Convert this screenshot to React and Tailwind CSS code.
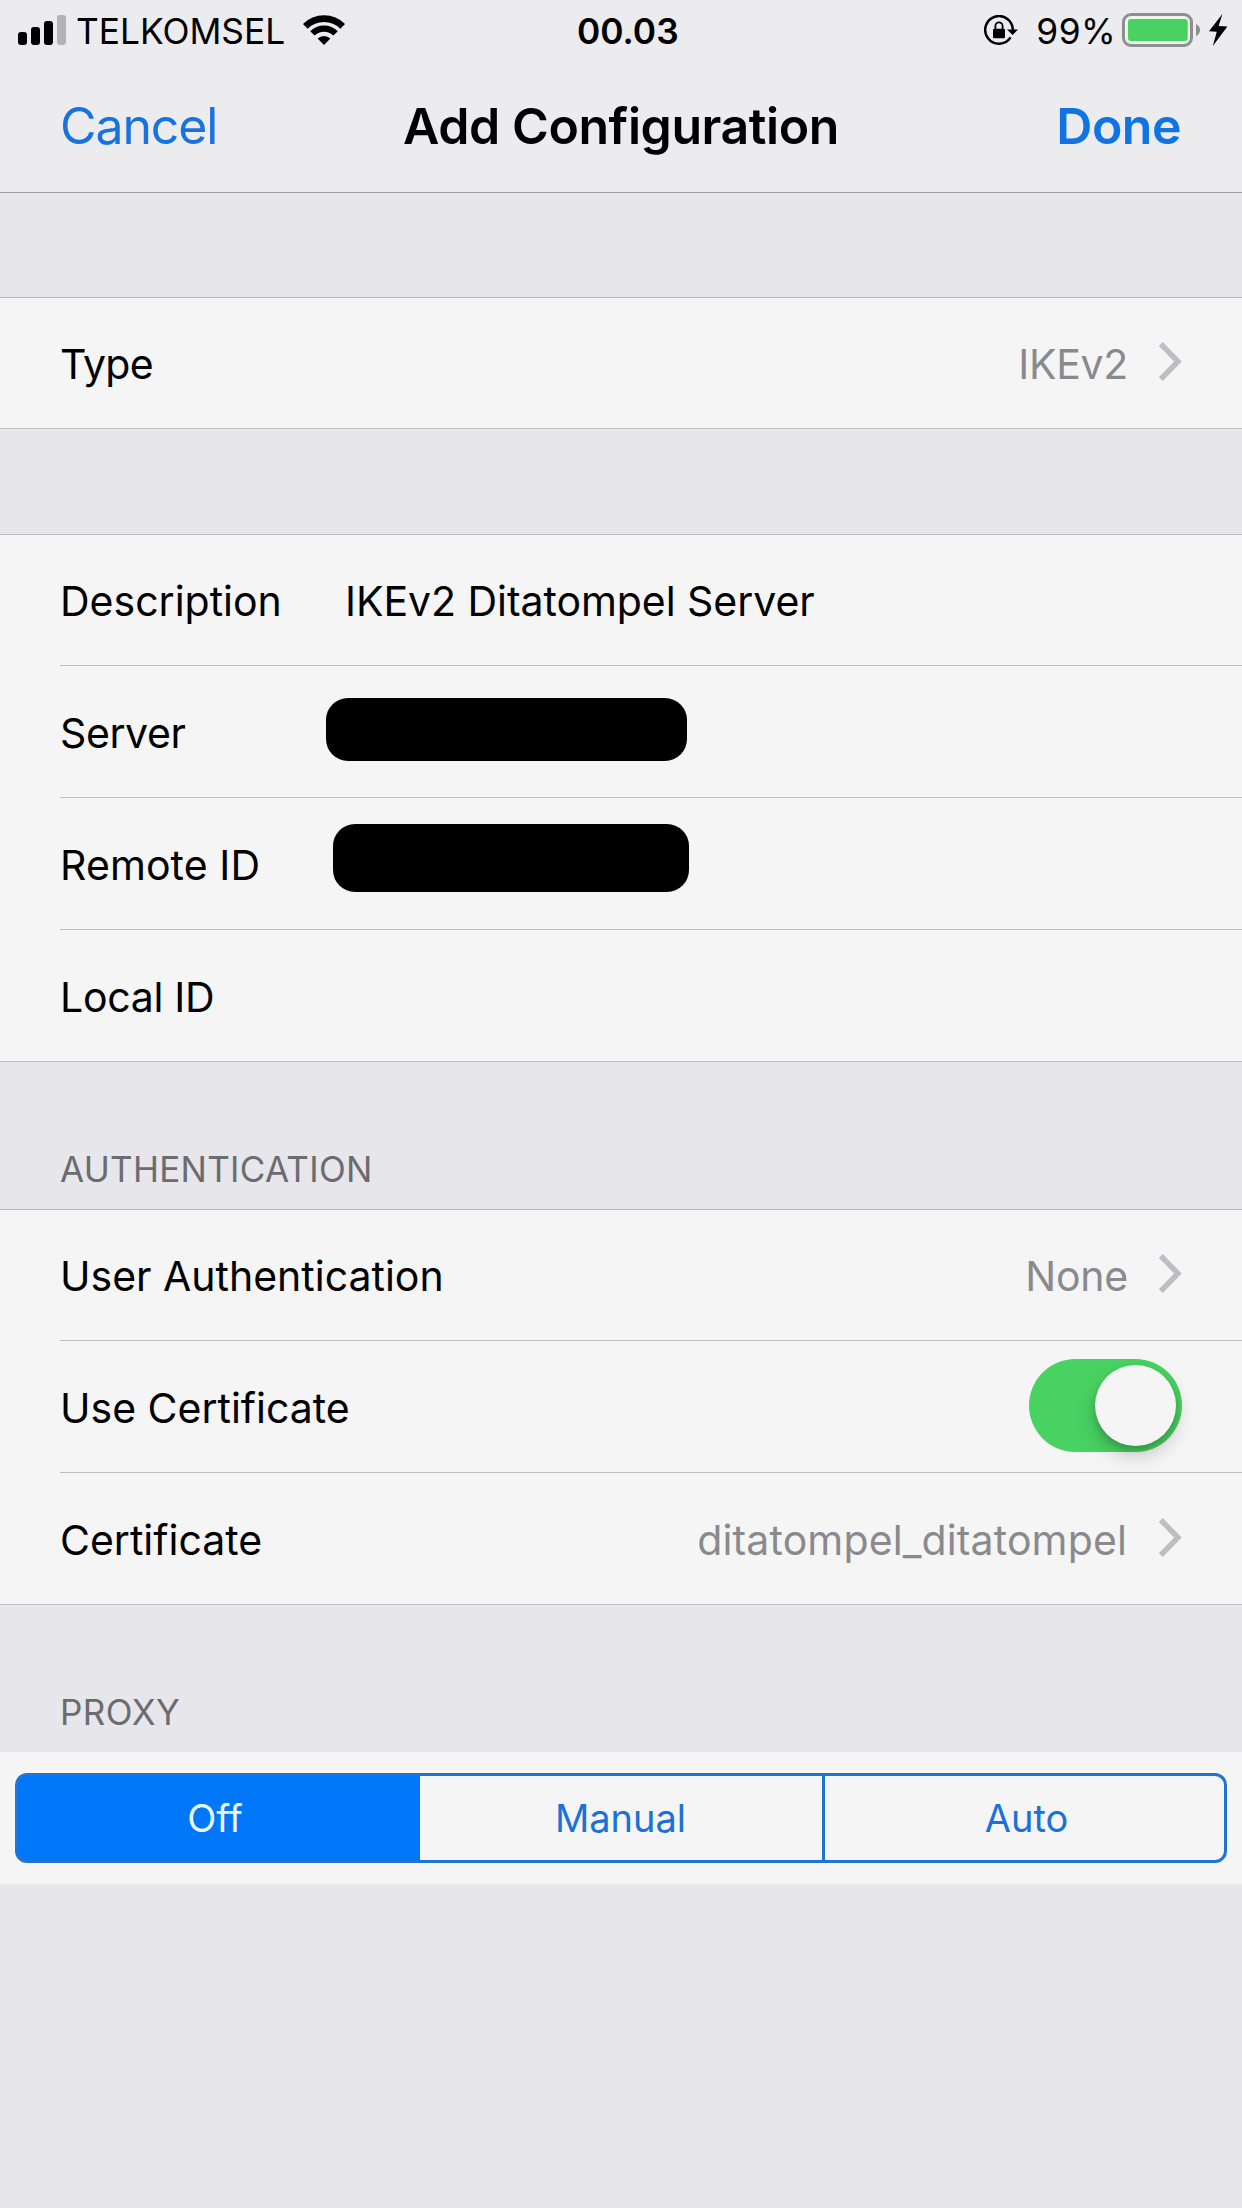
import React from "react";

function SignalIcon() {
  return (
    <svg width="48" height="30" viewBox="0 0 48 30" className="shrink-0">
      <rect x="0" y="17" width="9" height="13" rx="3" fill="#000" />
      <rect x="13" y="12" width="9" height="18" rx="3" fill="#000" />
      <rect x="26" y="6" width="9" height="24" rx="3" fill="#000" />
      <rect x="39" y="0" width="9" height="30" rx="3" fill="#b3b3b4" />
    </svg>
  );
}

function WifiIcon() {
  return (
    <svg width="42" height="30" viewBox="0 0 42 30" className="shrink-0">
      <path d="M2.3 11.3 A26.5 26.5 0 0 1 39.7 11.3" fill="none" stroke="#000" strokeWidth="6.6" />
      <path d="M9.4 18.4 A16.4 16.4 0 0 1 32.6 18.4" fill="none" stroke="#000" strokeWidth="6.2" />
      <path d="M21 30 L14.6 23.6 A9.05 9.05 0 0 1 27.4 23.6 Z" fill="#000" />
    </svg>
  );
}

function RotationLockIcon() {
  return (
    <svg width="34" height="31" viewBox="0 0 34 31" className="shrink-0">
      <path d="M26.6 22.4 A13.8 13.8 0 1 1 28.8 15.5" fill="none" stroke="#000" strokeWidth="2.5" />
      <path d="M23 14.4 H34 L28.6 20 Z" fill="#000" />
      <rect x="9" y="13.8" width="12" height="9.4" rx="1.2" fill="#000" />
      <path d="M11.4 14.5 V11 A3.6 3.6 0 0 1 18.6 11 V14.5" fill="none" stroke="#000" strokeWidth="1.8" />
    </svg>
  );
}

function BatteryIcon() {
  return (
    <svg width="78" height="34" viewBox="0 0 78 34" className="shrink-0">
      <rect x="1.5" y="1.5" width="68" height="31" rx="7.5" fill="#eafaea" stroke="#8f8f93" strokeWidth="3" />
      <rect x="6" y="6" width="59.7" height="22" rx="3" fill="#4ad162" />
      <path d="M74 11 Q78 13 78 17 Q78 21 74 23 Z" fill="#8f8f93" />
    </svg>
  );
}

function BoltIcon() {
  return (
    <svg width="19" height="32" viewBox="0 0 19 32" className="shrink-0">
      <path d="M13.4 0 L0 17.3 L7.8 17.8 L3.8 32 L18.4 12.5 L9.6 12 Z" fill="#000" />
    </svg>
  );
}

function Chevron() {
  return (
    <svg width="23" height="39" viewBox="0 0 23 39" className="mb-[3px] shrink-0">
      <path d="M1.8 2 L19 19.5 L1.8 37" fill="none" stroke="#bebec2" strokeWidth="5.4" />
    </svg>
  );
}

function Toggle() {
  return (
    <div className="mb-[2px] flex h-[93px] w-[153px] items-center justify-end rounded-full bg-[#48d261] pr-[6px]">
      <div className="size-[81px] rounded-full bg-[#f5f5f5] shadow-[0_9px_20px_rgba(0,0,0,0.2),0_4px_6px_rgba(0,0,0,0.14)]" />
    </div>
  );
}

function Section({ children }) {
  return <section className="border-y border-[#bebdc2] bg-[#f5f5f5]">{children}</section>;
}

function Row({ label, labelClass = "", first, last, children }) {
  const height = first && last ? "h-[130px]" : first || last ? "h-[131px]" : "h-[132px]";
  const line = last ? "" : "border-b border-[#bebdc2]";
  const pad = first ? "pt-[2px]" : "pt-[3px]";
  return (
    <div className={`ml-[60px] flex items-center pr-[60px] text-[41px] leading-[50px] ${height} ${line}`}>
      <span className={`shrink-0 whitespace-nowrap ${pad} ${labelClass}`}>{label}</span>
      {children}
    </div>
  );
}

function Detail({ children, className = "", first }) {
  const pad = first ? "pt-[2px]" : "pt-[3px]";
  return (
    <div className="ml-auto flex items-center">
      <span className={`whitespace-nowrap text-[#8a8a8e] ${pad} ${className}`}>{children}</span>
      <Chevron />
    </div>
  );
}

function SectionTitle({ children, className = "" }) {
  return (
    <h2 className={`flex h-[147px] items-end pb-[19px] pl-[60px] text-[35px] leading-[42px] text-[#6b6b70] ${className}`}>
      {children}
    </h2>
  );
}

export default function App() {
  return (
    <div className="flex h-[2208px] w-[1242px] flex-col overflow-hidden bg-[#e6e6eb] font-['Inter','Liberation_Sans',sans-serif] text-black">
      <header className="h-[193px] border-b border-[#9d9da1] bg-[#ececee]">
        <div className="flex h-[60px] items-center pl-[18px] pr-[14px] text-[35.3px] leading-[43px]">
          <div className="flex w-[559px] items-center">
            <SignalIcon />
            <span className="ml-[10px] mr-[18px] w-[209px] whitespace-nowrap pt-[3px]">TELKOMSEL</span>
            <WifiIcon />
          </div>
          <span className="pt-[3px] font-semibold">00.03</span>
          <div className="ml-auto flex items-center">
            <RotationLockIcon />
            <span className="ml-[18px] mr-[6px] pt-[3px] tracking-[0.4px]">99%</span>
            <BatteryIcon />
            <span className="ml-[9px]">
              <BoltIcon />
            </span>
          </div>
        </div>
        <nav className="grid h-[132px] grid-cols-[1fr_auto_1fr] items-center px-[60px] text-[50px] leading-[60px]">
          <button className="justify-self-start tracking-[-1.1px] text-[#1873de]">Cancel</button>
          <h1 className="font-semibold tracking-[-0.42px]">Add Configuration</h1>
          <button className="justify-self-end pr-px font-semibold tracking-[-0.5px] text-[#1074e4]">Done</button>
        </nav>
      </header>

      <main className="pt-[104px]">
        <Section>
          <Row label="Type" labelClass="tracking-[-0.8px]" first last>
            <Detail className="mr-[31px] tracking-[-0.3px]" first>IKEv2</Detail>
          </Row>
        </Section>

        <div className="h-[105px]" />

        <Section>
          <Row label="Description" labelClass="w-[285px]" first>
            <span className="whitespace-nowrap pt-[2px] tracking-[-0.05px]">IKEv2 Ditatompel Server</span>
          </Row>
          <Row label="Server" labelClass="w-[266px] tracking-[-0.4px]">
            <div className="mb-[4px] h-[63px] w-[361px] rounded-[22px] bg-black" />
          </Row>
          <Row label="Remote ID" labelClass="w-[273px] tracking-[0.1px]">
            <div className="mb-[11px] h-[68px] w-[356px] rounded-[22px] bg-black" />
          </Row>
          <Row label="Local ID" labelClass="tracking-[-0.3px]" last />
        </Section>

        <SectionTitle className="tracking-[0.28px]">AUTHENTICATION</SectionTitle>
        <Section>
          <Row label="User Authentication" first>
            <Detail className="mr-[31px] tracking-[-0.2px]" first>None</Detail>
          </Row>
          <Row label="Use Certificate">
            <div className="ml-auto">
              <Toggle />
            </div>
          </Row>
          <Row label="Certificate" last>
            <Detail className="mr-[32px] tracking-[0.13px]">ditatompel_ditatompel</Detail>
          </Row>
        </Section>

        <SectionTitle className="tracking-[0.4px]">PROXY</SectionTitle>
        <div className="h-[132px] bg-[#f5f5f5] px-[15px] py-[21px]">
          <div className="flex h-[90px] overflow-hidden rounded-[12px] border-[3px] border-[#2075d4] bg-[#2075d4] text-[38px] leading-[46px] text-[#1a71d8]">
            <button className="-my-[3px] -ml-[3px] w-[405px] bg-[#0077f9] pr-[5px] text-[#e9f8ff]">Off</button>
            <button className="w-[402px] bg-[#f5f5f5] pr-px">Manual</button>
            <button className="ml-[3px] flex-1 bg-[#f5f5f5] pl-[4px]">Auto</button>
          </div>
        </div>
      </main>
    </div>
  );
}
